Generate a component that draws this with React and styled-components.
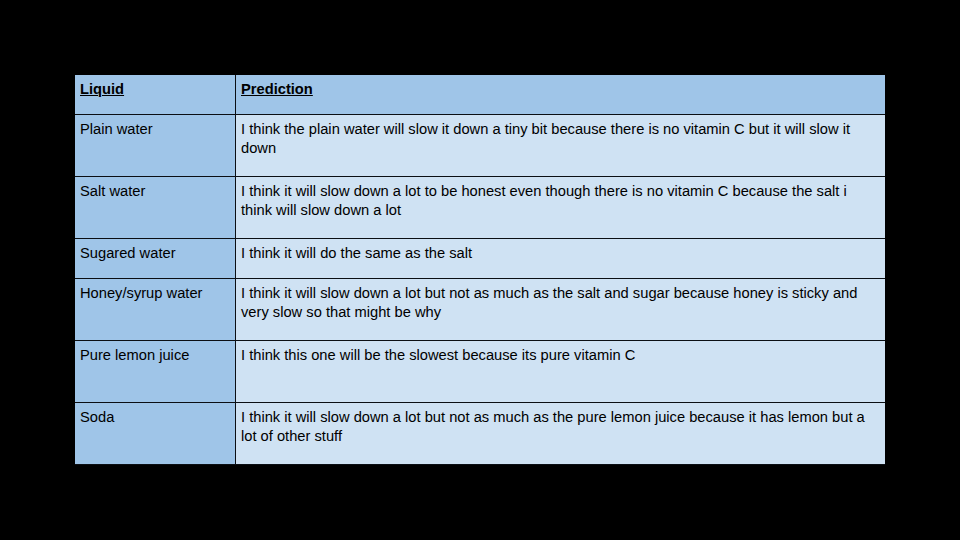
import React from "react";
import styled, { createGlobalStyle } from "styled-components";

const GlobalStyle = createGlobalStyle`
  html, body {
    margin: 0;
    padding: 0;
    background: #000;
  }
  body {
    font-family: "Liberation Sans", Arial, sans-serif;
  }
`;

const Slide = styled.div`
  width: 960px;
  height: 540px;
  background: #000;
  box-sizing: border-box;
  padding: 74px 75px 0 75px;
`;

const Table = styled.div`
  display: flex;
  flex-direction: column;
  width: 810px;
  border-top: 1px solid #000;
`;

const Row = styled.div`
  display: grid;
  grid-template-columns: 160px 1fr;
  height: ${props => props.tall ? "62px" : "40px"};
  border-bottom: 1px solid #0b0f14;
  box-sizing: border-box;
`;

const Cell = styled.div`
  box-sizing: border-box;
  padding: 5px 5px 0 5px;
  font-size: 14.7px;
  line-height: 19px;
  color: #000;
  background: ${props => props.dark ? "#9fc5e8" : "#cfe2f3"};
  border-left: ${props => props.first ? "none" : "1px solid #0b0f14"};
`;

const HeadText = styled.span`
  font-weight: bold;
  text-decoration: underline;
`;

const rows = [
  {
    liquid: "Plain water",
    text: "I think the plain water will slow it down a tiny bit because there is no vitamin C but it will slow it down",
    tall: true,
  },
  {
    liquid: "Salt water",
    text: "I think it will slow down a lot to be honest even though there is no vitamin C because the salt i think will slow down a lot",
    tall: true,
  },
  {
    liquid: "Sugared water",
    text: "I think it will do the same as the salt",
    tall: false,
  },
  {
    liquid: "Honey/syrup water",
    text: "I think it will slow down a lot but not as much as the salt and sugar because honey is sticky and very slow so that might be why",
    tall: true,
  },
  {
    liquid: "Pure lemon juice",
    text: "I think this one will be the slowest because its pure vitamin C",
    tall: true,
  },
  {
    liquid: "Soda",
    text: "I think it will slow down a lot but not as much as the pure lemon juice because it has lemon but a lot of other stuff",
    tall: true,
  },
];

export default function App() {
  return (
    <>
      <GlobalStyle />
      <Slide>
        <Table>
          <Row>
            <Cell dark first><HeadText>Liquid</HeadText></Cell>
            <Cell dark><HeadText>Prediction</HeadText></Cell>
          </Row>
          {rows.map((row, index) => (
            <Row key={index} tall={row.tall}>
              <Cell dark first>{row.liquid}</Cell>
              <Cell>{row.text}</Cell>
            </Row>
          ))}
        </Table>
      </Slide>
    </>
  );
}
